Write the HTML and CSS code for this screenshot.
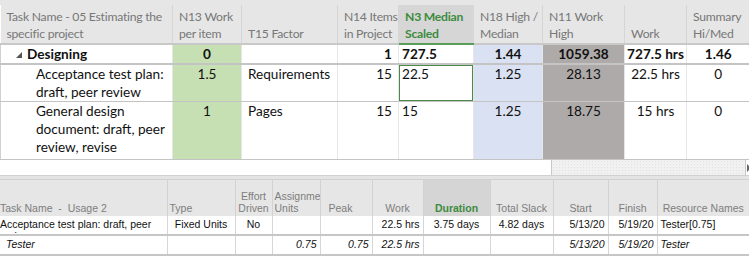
FILE: index.html
```html
<!DOCTYPE html>
<html lang="en">
<head>
    <meta charset="UTF-8">
    <title>Estimating the specific project</title>
    <link rel="stylesheet" href="styles.css">
</head>
<body>

<div class="project-view">
    <div class="top-strip"></div>
    <table class="task-sheet">
        <colgroup>
            <col style="width:172px">
            <col style="width:69px">
            <col style="width:96px">
            <col style="width:61px">
            <col style="width:75px">
            <col style="width:69px">
            <col style="width:82px">
            <col style="width:62px">
            <col style="width:63px">
        </colgroup>
        <thead>
            <tr>
                <th>Task Name - 05 Estimating the<br>specific project</th>
                <th>N13 Work<br>per item</th>
                <th>T15 Factor</th>
                <th>N14 Items<br>in Project</th>
                <th class="sorted">N3 Median<br>Scaled</th>
                <th>N18 High /<br>Median</th>
                <th>N11 Work<br>High</th>
                <th>Work</th>
                <th>Summary<br>Hi/Med</th>
            </tr>
        </thead>
        <tbody>
            <tr class="summary-row">
                <td class="name"><span class="collapse-icon"></span>Designing</td>
                <td class="green center">0</td>
                <td></td>
                <td class="right">1</td>
                <td class="left-num">727.5</td>
                <td class="blue center">1.44</td>
                <td class="grey center">1059.38</td>
                <td class="center">727.5 hrs</td>
                <td class="center">1.46</td>
            </tr>
            <tr class="task-row two-line">
                <td class="name sub">Acceptance test plan: draft, peer review</td>
                <td class="green center">1.5</td>
                <td>Requirements</td>
                <td class="right">15</td>
                <td class="left-num selected">22.5</td>
                <td class="blue center">1.25</td>
                <td class="grey center">28.13</td>
                <td class="center">22.5 hrs</td>
                <td class="center">0</td>
            </tr>
            <tr class="task-row three-line">
                <td class="name sub">General design document: draft, peer review, revise</td>
                <td class="green center">1</td>
                <td>Pages</td>
                <td class="right">15</td>
                <td class="left-num">15</td>
                <td class="blue center">1.25</td>
                <td class="grey center">18.75</td>
                <td class="center">15 hrs</td>
                <td class="center">0</td>
            </tr>
        </tbody>
    </table>

    <div class="h-scroll">
        <div class="scroll-thumb"></div>
        <div class="scroll-track"></div>
        <div class="scroll-arrow"></div>
    </div>
    <div class="split-bar"></div>

    <table class="usage-sheet">
        <colgroup>
            <col style="width:167px">
            <col style="width:68px">
            <col style="width:37px">
            <col style="width:48px">
            <col style="width:52px">
            <col style="width:51px">
            <col style="width:67px">
            <col style="width:63px">
            <col style="width:55px">
            <col style="width:49px">
            <col style="width:92px">
        </colgroup>
        <thead>
            <tr>
                <th class="left">Task Name &nbsp;- &nbsp;Usage 2</th>
                <th class="left">Type</th>
                <th>Effort<br>Driven</th>
                <th class="left">Assignment<br>Units</th>
                <th class="left pad">Peak</th>
                <th>Work</th>
                <th class="sorted">Duration</th>
                <th>Total Slack</th>
                <th>Start</th>
                <th>Finish</th>
                <th>Resource Names</th>
            </tr>
        </thead>
        <tbody>
            <tr class="task-line">
                <td class="clip"><div class="clip-text">Acceptance test plan: draft, peer review</div></td>
                <td class="center">Fixed Units</td>
                <td class="center">No</td>
                <td></td>
                <td></td>
                <td class="right">22.5 hrs</td>
                <td class="center">3.75 days</td>
                <td class="center">4.82 days</td>
                <td class="right">5/13/20</td>
                <td class="right">5/19/20</td>
                <td>Tester[0.75]</td>
            </tr>
            <tr class="assign-line">
                <td class="indent">Tester</td>
                <td></td>
                <td></td>
                <td class="right">0.75</td>
                <td class="right">0.75</td>
                <td class="right">22.5 hrs</td>
                <td></td>
                <td></td>
                <td class="right">5/13/20</td>
                <td class="right">5/19/20</td>
                <td>Tester</td>
            </tr>
        </tbody>
    </table>
</div>

</body>
</html>
```

FILE: styles.css
```css
body {
    margin: 0;
    padding: 0;
    background-color: #fff;
    overflow: hidden;
}

.project-view {
    width: 749px;
    height: 257px;
    display: flex;
    flex-direction: column;
    overflow: hidden;
}

.top-strip {
    height: 5px;
    background-color: #e6e6e6;
    flex: none;
}

/* upper sheet: calibri look-alike */
.task-sheet {
    width: 749px;
    border-collapse: collapse;
    table-layout: fixed;
    font-family: Lato, "Open Sans", sans-serif;
    color: #111;
    flex: none;
}

.task-sheet th {
    height: 37px;
    padding: 0 0 1px 6px;
    background-color: #e6e6e6;
    color: #777;
    font-weight: normal;
    font-size: 12.2px;
    letter-spacing: -0.25px;
    line-height: 17px;
    text-align: left;
    vertical-align: bottom;
    border-left: 1px solid #d6d6d6;
    border-bottom: 2px solid #c8c8c8;
    overflow: hidden;
    white-space: nowrap;
}

.task-sheet th:first-child {
    border-left: none;
}

.task-sheet th.sorted {
    background-color: #d6d6d6;
    color: #3d8b3d;
    font-weight: bold;
    border-bottom: 2px solid #5a9e5a;
}

.task-sheet td {
    font-size: 13.6px;
    line-height: 18px;
    padding: 0 6px;
    vertical-align: top;
    border-left: 1px solid #e6e6e6;
    border-bottom: 1px solid #c4c4c4;
    white-space: nowrap;
    overflow: hidden;
}

.task-sheet td:first-child {
    border-left: 1px solid #d0d0d0;
}

.summary-row td {
    height: 18px;
    font-weight: bold;
    border-bottom: 2px solid #c4c4c4;
}

.two-line td {
    height: 34px;
}

.three-line td {
    height: 57px;
}

.task-sheet td.name {
    white-space: normal;
    padding-left: 15px;
}

.task-sheet td.sub {
    padding-left: 35px;
    padding-right: 4px;
}

.collapse-icon {
    display: inline-block;
    width: 0;
    height: 0;
    border-left: 6px solid transparent;
    border-bottom: 6px solid #555;
    margin-right: 5px;
    vertical-align: 1px;
}

.task-sheet td.center {
    text-align: center;
    padding: 0;
}

.right { text-align: right; }
.center { text-align: center; }
.task-sheet td.left-num { padding-left: 3px; }

.green { background-color: #c6e0b4; }
.blue { background-color: #d9e1f2; }
.grey { background-color: #aeaaa9; }

.task-sheet td.selected {
    box-shadow: inset 0 0 0 1px #4b8a4b;
}

/* horizontal scrollbar of the upper pane */
.h-scroll {
    height: 15px;
    display: flex;
    flex: none;
    border-bottom: 1px solid #d0d0d0;
}

.scroll-thumb {
    flex: 551px 0 0;
    background-color: #fff;
    border-right: 1px solid #c8c8c8;
}

.scroll-track {
    flex: 1;
    background-color: #f1f1f1;
    background-image: radial-gradient(#e2e2e2 0.6px, transparent 0.8px);
    background-size: 3px 3px;
}

.scroll-arrow {
    width: 3px;
    border-left: 1px solid #c8c8c8;
    background-color: #fff;
    position: relative;
}

.scroll-arrow::after {
    content: "";
    position: absolute;
    left: 1px;
    top: 4px;
    border-top: 4px solid transparent;
    border-bottom: 4px solid transparent;
    border-left: 4px solid #666;
}

.split-bar {
    height: 3px;
    flex: none;
    background-color: #e4e4e4;
    border-bottom: 1px solid #d0d0d0;
}

/* lower sheet: arial look */
.usage-sheet {
    width: 749px;
    border-collapse: collapse;
    table-layout: fixed;
    font-family: "Liberation Sans", Arial, sans-serif;
    font-size: 10.5px;
    color: #111;
    flex: none;
}

.usage-sheet th {
    height: 34px;
    padding: 0 2px 2px 2px;
    background-color: #e6e6e6;
    color: #7d7d7d;
    font-weight: normal;
    line-height: 12px;
    text-align: center;
    vertical-align: bottom;
    border-left: 1px solid #d2d2d2;
    white-space: nowrap;
    overflow: hidden;
}

.usage-sheet th:first-child {
    border-left: none;
    padding-left: 0;
}

.usage-sheet th.left { text-align: left; }
.usage-sheet th.pad { padding-left: 8px; }

.usage-sheet th.sorted {
    background-color: #d5d5d5;
    color: #3d8b3d;
    font-weight: bold;
}

.usage-sheet td {
    height: 16px;
    padding: 2px 3px 0 3px;
    line-height: 13px;
    vertical-align: top;
    border-left: 1px solid #d6d6d6;
    border-bottom: 2px solid #c6c6c6;
    white-space: nowrap;
    overflow: hidden;
}

.usage-sheet td:first-child {
    border-left: none;
    padding-left: 0;
}

.usage-sheet td.clip {
    padding-top: 0;
}

.clip-text {
    height: 18px;
    overflow: hidden;
    white-space: normal;
    line-height: 12px;
    padding-top: 2px;
    box-sizing: border-box;
}

.assign-line td {
    font-style: italic;
}

.usage-sheet td.indent {
    padding-left: 6px;
}
```
